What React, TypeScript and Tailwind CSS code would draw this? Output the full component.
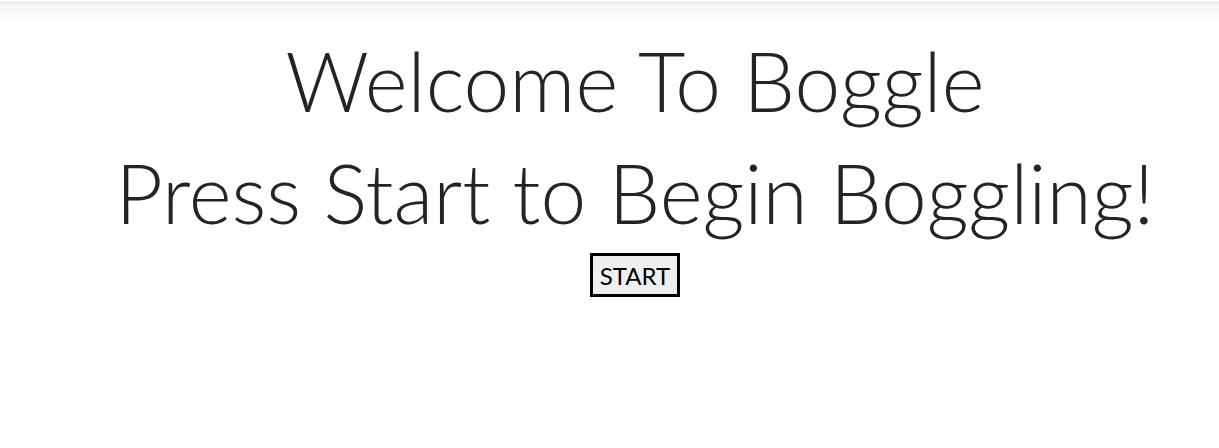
function StartButton() {
  return (
    <button className="w-[90px] h-[44px] pt-[2px] border-[3px] border-black bg-[#efefef] text-black text-[24px] leading-none font-['Lato',sans-serif]">
      START
    </button>
  );
}

export default function App() {
  return (
    <div className="min-h-[448px] bg-white font-['Lato',sans-serif]">
      {/* top shadow strip */}
      <div className="pt-[2px]">
        <div className="h-[22px] border-t border-[#e1dee9] bg-linear-to-b from-[#f4f4f4] to-white"></div>
      </div>
      <div className="pl-[51px] text-center text-[#212529]">
        <h1 className="text-[82px] leading-[112px] font-light">Welcome To Boggle</h1>
        <h1 className="text-[82px] leading-[112px] font-light">Press Start to Begin Boggling!</h1>
        <div className="mt-[5px]">
          <StartButton />
        </div>
      </div>
    </div>
  );
}
